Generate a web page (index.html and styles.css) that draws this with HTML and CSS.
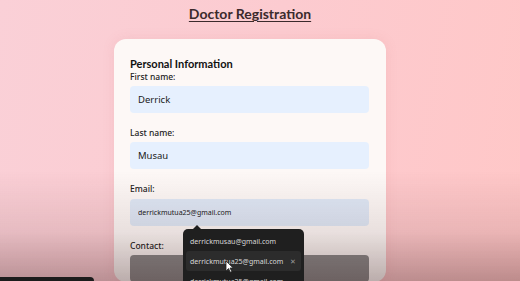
FILE: index.html
```html
<!DOCTYPE html>
<html lang="en">
<head>
    <meta charset="UTF-8">
    <meta name="viewport" content="width=device-width, initial-scale=1.0">
    <title>Doctor Registration</title>
    <link rel="stylesheet" href="styles.css">
</head>
<body>
    <h1 class="page-title">Doctor Registration</h1>

    <form class="reg-card">
        <h2 class="section-title">Personal Information</h2>

        <label class="field-label" for="first-name">First name:</label>
        <input class="field" id="first-name" type="text" value="Derrick">

        <label class="field-label" for="last-name">Last name:</label>
        <input class="field" id="last-name" type="text" value="Musau">

        <label class="field-label" for="email">Email:</label>
        <div class="email-wrap">
            <input class="field field-autofill" id="email" type="email" value="derrickmutua25@gmail.com">

            <!-- browser autofill suggestions -->
            <div class="suggest">
                <div class="suggest-item">derrickmusau@gmail.com</div>
                <div class="suggest-item active">
                    <span>derrickmutua25@gmail.com</span>
                    <span class="suggest-x">&#x2715;</span>
                </div>
                <div class="suggest-item">derrickmutua25@gmail.com</div>
                <svg class="cursor" width="9" height="13" viewBox="0 0 9 13">
                    <path d="M1 1 L1 11 L3.5 8.6 L5.3 12.2 L6.8 11.5 L5 8 L8.2 8 Z" fill="#fff" stroke="#222" stroke-width="0.8"/>
                </svg>
            </div>
        </div>

        <label class="field-label" for="contact">Contact:</label>
        <input class="field field-grey" id="contact" type="text">
    </form>

    <div class="shade"></div>
    <div class="player-bar"></div>
</body>
</html>
```

FILE: styles.css
```css
* {
    margin: 0;
    padding: 0;
    box-sizing: border-box;
}

body {
    height: 281px;
    overflow: hidden;
    padding-right: 20px;
    background: linear-gradient(100deg, #fad0d7 0%, #fccbd0 50%, #ffc7c7 100%);
    font-family: 'Noto Sans', 'Open Sans', sans-serif;
    color: #1d1d1d;
    display: flex;
    flex-direction: column;
    align-items: center;
}

.page-title {
    margin-top: 4px;
    font-family: 'Lato', 'Noto Sans', sans-serif;
    font-size: 14px;
    font-weight: 700;
    line-height: 20px;
    color: #3b2a2c;
    text-decoration: underline;
    text-underline-offset: 2px;
    text-decoration-thickness: 1px;
}

.reg-card {
    margin-top: 15px;
    width: 272px;
    background: #fdf8f6;
    border-radius: 12px;
    padding: 17px 17px 0 16px;
    display: flex;
    flex-direction: column;
    box-shadow: 0 0 12px rgba(200, 120, 120, 0.15);
}

.section-title {
    font-family: 'Lato', 'Noto Sans', sans-serif;
    font-size: 11px;
    font-weight: 700;
    line-height: 15px;
    color: #111;
}

.field-label {
    font-size: 8.5px;
    font-weight: 500;
    line-height: 12px;
    margin-bottom: 3px;
    color: #222;
}

.field {
    width: 100%;
    height: 27px;
    border: none;
    border-radius: 4px;
    background: #e6f0fe;
    padding: 0 8px;
    font-family: inherit;
    font-size: 9.5px;
    color: #1a1a1a;
    margin-bottom: 14px;
    outline: none;
}

.email-wrap {
    position: relative;
}

.field-autofill {
    background: #dfe8f6;
    font-size: 7px;
}

.field-grey {
    background: #8a8a8a;
    margin-bottom: 0;
}

.suggest {
    position: absolute;
    left: 53px;
    top: 31px;
    width: 121px;
    padding: 2px 0;
    background: #1f1f1f;
    border-radius: 5px;
    z-index: 5;
}

.suggest::before {
    content: "";
    position: absolute;
    top: -4px;
    left: 10px;
    border-left: 4px solid transparent;
    border-right: 4px solid transparent;
    border-bottom: 4px solid #1f1f1f;
}

.suggest-item {
    display: flex;
    justify-content: space-between;
    align-items: center;
    height: 20px;
    padding: 0 8px 0 7px;
    font-size: 7px;
    color: #d8d8d8;
}

.suggest-item.active {
    background: #2c2c2c;
    margin: 0 3px;
    padding: 0 5px 0 4px;
    border-radius: 3px;
}

.suggest-x {
    font-size: 7px;
    color: #9a9a9a;
}

.cursor {
    position: absolute;
    left: 42px;
    top: 31px;
}

.shade {
    position: fixed;
    left: 0;
    right: 0;
    bottom: 0;
    height: 110px;
    background: linear-gradient(to bottom, rgba(60, 20, 20, 0) 0%, rgba(60, 20, 20, 0.1) 55%, rgba(50, 15, 15, 0.32) 100%);
    pointer-events: none;
    z-index: 3;
}

.player-bar {
    position: fixed;
    left: 0;
    bottom: 0;
    width: 94px;
    height: 4px;
    background: #1c1c1c;
    border-top-right-radius: 4px;
    z-index: 6;
}
```
